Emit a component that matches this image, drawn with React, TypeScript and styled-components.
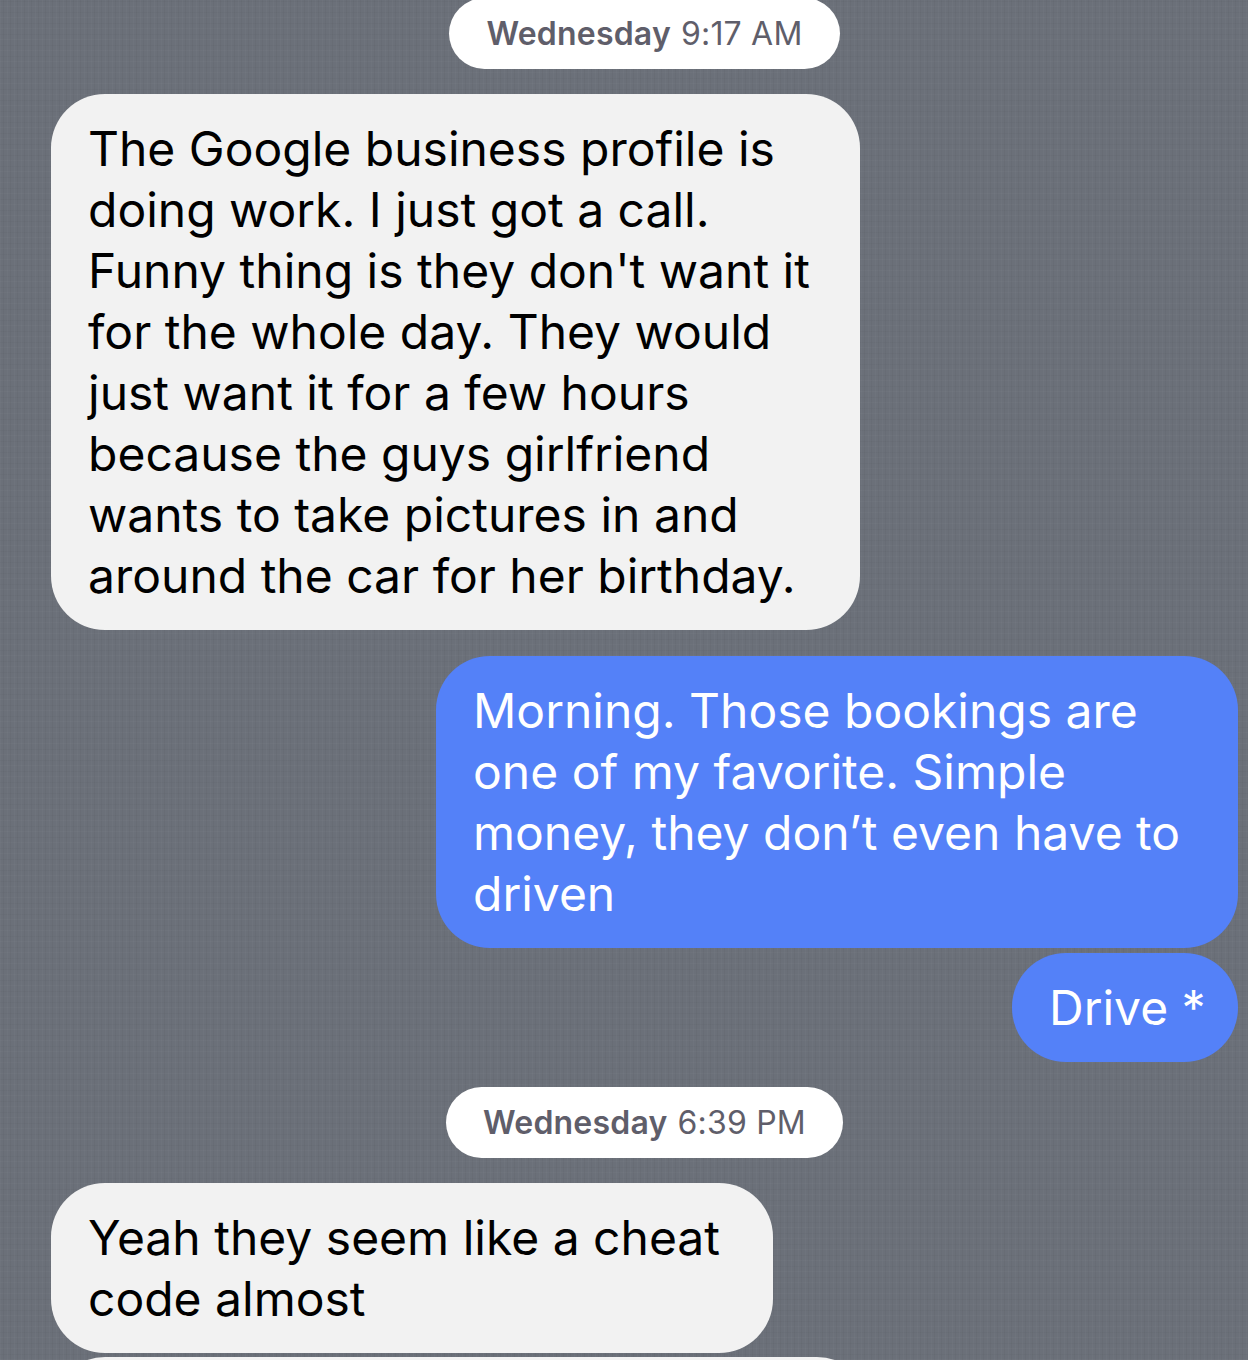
import React from 'react'
import styled, { createGlobalStyle } from 'styled-components'

const GlobalStyle = createGlobalStyle`
  html, body {
    margin: 0;
    padding: 0;
  }

  body {
    background-color: #6b7079;
    background-image:
      repeating-linear-gradient(90deg, rgba(255, 255, 255, 0.025) 0 1px, transparent 1px 3px, rgba(0, 0, 0, 0.03) 3px 4px, transparent 4px 7px),
      repeating-linear-gradient(0deg, rgba(255, 255, 255, 0.02) 0 1px, transparent 1px 5px, rgba(0, 0, 0, 0.025) 5px 6px, transparent 6px 11px);
    font-family: Inter, 'Noto Sans', 'Liberation Sans', sans-serif;
  }
`

const Screen = styled.div`
  height: 1360px;
  overflow: hidden;
  box-sizing: border-box;
  padding: 0 10px 0 51px;
  display: flex;
  flex-direction: column;
`

const Stamp = styled.div<{ $top: number }>`
  align-self: center;
  flex-shrink: 0;
  margin-top: ${p => p.$top}px;
  height: 71px;
  padding: 0 37px;
  box-sizing: border-box;
  display: flex;
  align-items: center;
  gap: 10px;
  background: #ffffff;
  border-radius: 36px;
  color: #5f5e6a;
  font-size: 32px;
  letter-spacing: 0.2px;

  b {
    font-weight: 600;
  }
`

const Bubble = styled.div<{ $sent?: boolean, $top: number, $width?: number }>`
  align-self: ${p => (p.$sent ? 'flex-end' : 'flex-start')};
  flex-shrink: 0;
  margin-top: ${p => p.$top}px;
  ${p => (p.$width ? `width: ${p.$width}px;` : '')}
  box-sizing: border-box;
  padding: 24px 37px;
  border-radius: 54px;
  background: ${p => (p.$sent ? '#5481f8' : '#f2f2f2')};
  color: ${p => (p.$sent ? '#ffffff' : '#000000')};
  font-size: 48px;
  line-height: 61px;
  white-space: nowrap;
`

const Line = styled.div``

interface Msg {
  sent?: boolean
  top: number
  lines: string[]
  width?: number
}

const morning: Msg[] = [
  {
    top: 25,
    width: 809,
    lines: [
      'The Google business profile is',
      'doing work. I just got a call.',
      "Funny thing is they don't want it",
      'for the whole day. They would',
      'just want it for a few hours',
      'because the guys girlfriend',
      'wants to take pictures in and',
      'around the car for her birthday.'
    ]
  },
  {
    sent: true,
    top: 26,
    width: 802,
    lines: [
      'Morning. Those bookings are',
      'one of my favorite. Simple',
      'money, they don’t even have to',
      'driven'
    ]
  },
  { sent: true, top: 5, width: 226, lines: ['Drive *'] }
]

const evening: Msg[] = [
  { top: 25, width: 722, lines: ['Yeah they seem like a cheat', 'code almost'] },
  { top: 4, width: 820, lines: ['\u00a0', '\u00a0'] }
]

const renderMsg = (m: Msg, i: number): JSX.Element => (
  <Bubble key={i} $sent={m.sent} $top={m.top} $width={m.width}>
    {m.lines.map((l, j) => <Line key={j}>{l}</Line>)}
  </Bubble>
)

export default function App (): JSX.Element {
  return (
    <>
      <GlobalStyle />
      <Screen>
        <Stamp $top={-2}><b>Wednesday</b> 9:17 AM</Stamp>
        {morning.map(renderMsg)}
        <Stamp $top={25}><b>Wednesday</b> 6:39 PM</Stamp>
        {evening.map(renderMsg)}
      </Screen>
    </>
  )
}
